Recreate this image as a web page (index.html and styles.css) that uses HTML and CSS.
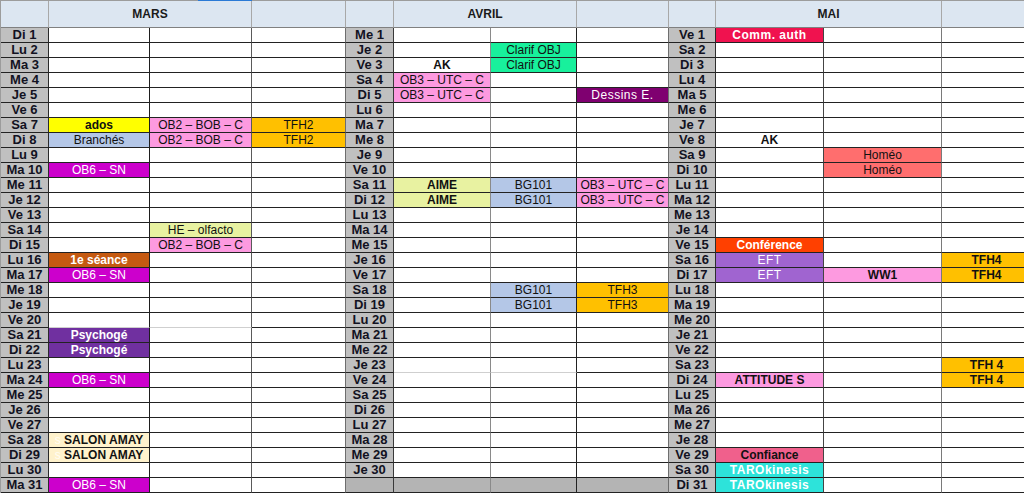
FILE: index.html
```html
<!DOCTYPE html>
<html lang="fr">
<head>
<meta charset="utf-8">
<title>Planning mars – mai</title>
<link rel="stylesheet" href="styles.css">
</head>
<body>
<div class="sheet">
  <div class="head">
    <div></div><div class="month mars">MARS</div><div></div>
    <div></div><div class="month">AVRIL</div><div></div>
    <div></div><div class="month">MAI</div><div></div>
  </div>
  <div class="body">
    <div class="day">Di 1</div><div></div><div></div><div></div><div class="day">Me 1</div><div></div><div></div><div></div><div class="day">Ve 1</div><div class="ev crimson b w ls">Comm. auth</div><div></div><div></div>
    <div class="day">Lu 2</div><div></div><div></div><div></div><div class="day">Je 2</div><div></div><div class="ev mint">Clarif OBJ</div><div></div><div class="day">Sa 2</div><div></div><div></div><div></div>
    <div class="day">Ma 3</div><div></div><div></div><div></div><div class="day">Ve 3</div><div class="ev b">AK</div><div class="ev mint">Clarif OBJ</div><div></div><div class="day">Di 3</div><div></div><div></div><div></div>
    <div class="day">Me 4</div><div></div><div></div><div></div><div class="day">Sa 4</div><div class="ev pink">OB3 – UTC – C</div><div></div><div></div><div class="day">Lu 4</div><div></div><div></div><div></div>
    <div class="day">Je 5</div><div></div><div></div><div></div><div class="day">Di 5</div><div class="ev pink">OB3 – UTC – C</div><div></div><div class="ev plum w ls">Dessins E.</div><div class="day">Ma 5</div><div></div><div></div><div></div>
    <div class="day">Ve 6</div><div></div><div></div><div></div><div class="day">Lu 6</div><div></div><div></div><div></div><div class="day">Me 6</div><div></div><div></div><div></div>
    <div class="day">Sa 7</div><div class="ev yellow b">ados</div><div class="ev pink">OB2 – BOB – C</div><div class="ev orange">TFH2</div><div class="day">Ma 7</div><div></div><div></div><div></div><div class="day">Je 7</div><div></div><div></div><div></div>
    <div class="day">Di 8</div><div class="ev blue">Branchés</div><div class="ev pink">OB2 – BOB – C</div><div class="ev orange">TFH2</div><div class="day">Me 8</div><div></div><div></div><div></div><div class="day">Ve 8</div><div class="ev b">AK</div><div></div><div></div>
    <div class="day">Lu 9</div><div></div><div></div><div></div><div class="day">Je 9</div><div></div><div></div><div></div><div class="day">Sa 9</div><div></div><div class="ev coral">Homéo</div><div></div>
    <div class="day">Ma 10</div><div class="ev magenta w">OB6 – SN</div><div></div><div></div><div class="day">Ve 10</div><div></div><div></div><div></div><div class="day">Di 10</div><div></div><div class="ev coral">Homéo</div><div></div>
    <div class="day">Me 11</div><div></div><div></div><div></div><div class="day">Sa 11</div><div class="ev lime b">AIME</div><div class="ev blue">BG101</div><div class="ev pink">OB3 – UTC – C</div><div class="day">Lu 11</div><div></div><div></div><div></div>
    <div class="day">Je 12</div><div></div><div></div><div></div><div class="day">Di 12</div><div class="ev lime b">AIME</div><div class="ev blue">BG101</div><div class="ev pink">OB3 – UTC – C</div><div class="day">Ma 12</div><div></div><div></div><div></div>
    <div class="day">Ve 13</div><div></div><div></div><div></div><div class="day">Lu 13</div><div></div><div></div><div></div><div class="day">Me 13</div><div></div><div></div><div></div>
    <div class="day">Sa 14</div><div></div><div class="ev lime">HE – olfacto</div><div></div><div class="day">Ma 14</div><div></div><div></div><div></div><div class="day">Je 14</div><div></div><div></div><div></div>
    <div class="day">Di 15</div><div></div><div class="ev pink">OB2 – BOB – C</div><div></div><div class="day">Me 15</div><div></div><div></div><div></div><div class="day">Ve 15</div><div class="ev red b w">Conférence</div><div></div><div></div>
    <div class="day">Lu 16</div><div class="ev brown b w">1e séance</div><div></div><div></div><div class="day">Je 16</div><div class="soft-r"></div><div></div><div></div><div class="day">Sa 16</div><div class="ev violet w ls">EFT</div><div></div><div class="ev orange b">TFH4</div>
    <div class="day">Ma 17</div><div class="ev magenta w">OB6 – SN</div><div></div><div></div><div class="day">Ve 17</div><div class="soft-r"></div><div></div><div></div><div class="day">Di 17</div><div class="ev violet w ls">EFT</div><div class="ev pink b">WW1</div><div class="ev orange b">TFH4</div>
    <div class="day">Me 18</div><div></div><div></div><div></div><div class="day">Sa 18</div><div></div><div class="ev blue">BG101</div><div class="ev orange">TFH3</div><div class="day">Lu 18</div><div></div><div></div><div></div>
    <div class="day">Je 19</div><div></div><div></div><div></div><div class="day">Di 19</div><div></div><div class="ev blue">BG101</div><div class="ev orange">TFH3</div><div class="day">Ma 19</div><div></div><div></div><div></div>
    <div class="day">Ve 20</div><div class="soft-r soft-b"></div><div class="soft-b"></div><div></div><div class="day">Lu 20</div><div></div><div></div><div></div><div class="day">Me 20</div><div></div><div></div><div></div>
    <div class="day">Sa 21</div><div class="ev purple b w">Psychogé</div><div></div><div></div><div class="day">Ma 21</div><div></div><div></div><div></div><div class="day">Je 21</div><div></div><div></div><div></div>
    <div class="day">Di 22</div><div class="ev purple b w">Psychogé</div><div></div><div></div><div class="day">Me 22</div><div></div><div></div><div></div><div class="day">Ve 22</div><div></div><div></div><div></div>
    <div class="day">Lu 23</div><div></div><div></div><div></div><div class="day">Je 23</div><div class="soft-b"></div><div class="soft-b"></div><div></div><div class="day">Sa 23</div><div></div><div></div><div class="ev orange b">TFH 4</div>
    <div class="day">Ma 24</div><div class="ev magenta w">OB6 – SN</div><div></div><div></div><div class="day">Ve 24</div><div class="soft-r"></div><div></div><div></div><div class="day">Di 24</div><div class="ev pink b">ATTITUDE S</div><div></div><div class="ev orange b">TFH 4</div>
    <div class="day">Me 25</div><div></div><div></div><div></div><div class="day">Sa 25</div><div></div><div></div><div></div><div class="day">Lu 25</div><div></div><div></div><div></div>
    <div class="day">Je 26</div><div></div><div></div><div></div><div class="day">Di 26</div><div></div><div></div><div></div><div class="day">Ma 26</div><div></div><div></div><div></div>
    <div class="day">Ve 27</div><div></div><div></div><div></div><div class="day">Lu 27</div><div></div><div></div><div></div><div class="day">Me 27</div><div></div><div></div><div></div>
    <div class="day">Sa 28</div><div class="ev cream b"><span class="ghost">s</span> SALON AMAY</div><div></div><div></div><div class="day">Ma 28</div><div></div><div></div><div></div><div class="day">Je 28</div><div></div><div></div><div></div>
    <div class="day">Di 29</div><div class="ev cream b"><span class="ghost">s</span> SALON AMAY</div><div></div><div></div><div class="day">Me 29</div><div></div><div></div><div></div><div class="day">Ve 29</div><div class="ev rose b">Confiance</div><div></div><div></div>
    <div class="day">Lu 30</div><div></div><div></div><div></div><div class="day">Je 30</div><div></div><div></div><div></div><div class="day">Sa 30</div><div class="ev teal b w ls">TAROkinesis</div><div></div><div></div>
    <div class="day">Ma 31</div><div class="ev magenta w">OB6 – SN</div><div></div><div></div><div class="day none"></div><div class="none"></div><div class="none"></div><div class="none"></div><div class="day">Di 31</div><div class="ev teal b w ls">TAROkinesis</div><div></div><div></div>
  </div>
</div>
</body>
</html>
```
FILE: styles.css
```css
html, body {
  margin: 0;
  overflow: hidden;
  background: #fff;
}

.sheet {
  --cols: 48px 101px 102px 94px 48px 97px 86px 92px 47px 108px 118px 90px;
  width: max-content;
  border-top: 1px solid #9c9c9c;
  border-left: 1px solid #9c9c9c;
  font-family: "Liberation Sans", Arial, sans-serif;
  color: #111;
}

.head {
  display: grid;
  grid-template-columns: var(--cols);
  grid-template-rows: 27px;
  background: #dce6f1;
}

.head > div {
  border-right: 1px solid #a8a8a8;
  border-bottom: 1px solid #808080;
  font-size: 12px;
  font-weight: bold;
  line-height: 26px;
  text-align: center;
  color: #1a1a1a;
}

.head > .month {
  grid-column: span 2;
}

.head > .mars {
  position: relative;
}

.head > .mars::after {
  content: "";
  position: absolute;
  top: -1px;
  right: -1px;
  width: 54px;
  height: 1px;
  background: #2b7ad6;
}

.body {
  display: grid;
  grid-template-columns: var(--cols);
  grid-auto-rows: 15px;
}

.body > div {
  border-right: 1px solid #444;
  border-bottom: 1px solid #222;
  background: #fff;
  font-size: 12px;
  line-height: 14px;
  text-align: center;
  white-space: nowrap;
  overflow: hidden;
}

/* column rule colours */
.body > div:nth-child(12n+1) { border-right-color: #2a2a2a; }
.body > div:nth-child(12n+2) { border-right-color: #1e1e1e; }
.body > div:nth-child(12n+3) { border-right-color: #5a5a5a; }
.body > div:nth-child(12n+4) { border-right-color: #6e6e6e; }
.body > div:nth-child(12n+5) { border-right-color: #3a3a3a; }
.body > div:nth-child(12n+6) { border-right-color: #8a8a8a; }
.body > div:nth-child(12n+7) { border-right-color: #222; }
.body > div:nth-child(12n+8) { border-right-color: #6e6e6e; }
.body > div:nth-child(12n+9) { border-right-color: #2e2e2e; }
.body > div:nth-child(12n+10) { border-right-color: #444; }
.body > div:nth-child(12n+11) { border-right-color: #7a7a7a; }
.body > div:nth-child(12n+12) { border-right-color: #7a7a7a; }

.body > .soft-r { border-right-color: #cfcfcf; }
.body > .soft-b { border-bottom-color: #cfcfcf; }

.body > .day {
  background: #c0c0c0;
  font-size: 13px;
  font-weight: bold;
  color: #121222;
}

.body > .none { background: #b4b4b4; }

.b { font-weight: bold; }
.body > .w { color: #fff; }
.ls { letter-spacing: 0.5px; }

.body > .yellow { background: #ffff00; }
.body > .pink { background: #fd9ae0; }
.body > .orange { background: #ffc000; }
.body > .blue { background: #b4c7e7; }
.body > .magenta { background: #cc00cc; }
.body > .lime { background: #e8f2a1; }
.body > .brown { background: #c55a11; }
.body > .purple { background: #7030a0; }
.body > .cream { background: #fff2cc; }
.body > .mint { background: #18f09c; }
.body > .plum { background: #7f0070; }
.body > .crimson { background: #f0124f; }
.body > .coral { background: #ff6e6e; }
.body > .red { background: #ff4000; }
.body > .violet { background: #a064d0; }
.body > .rose { background: #f0608c; }
.body > .teal { background: #2de3da; }

.ghost { color: #fffdf4; font-weight: normal; }
```
